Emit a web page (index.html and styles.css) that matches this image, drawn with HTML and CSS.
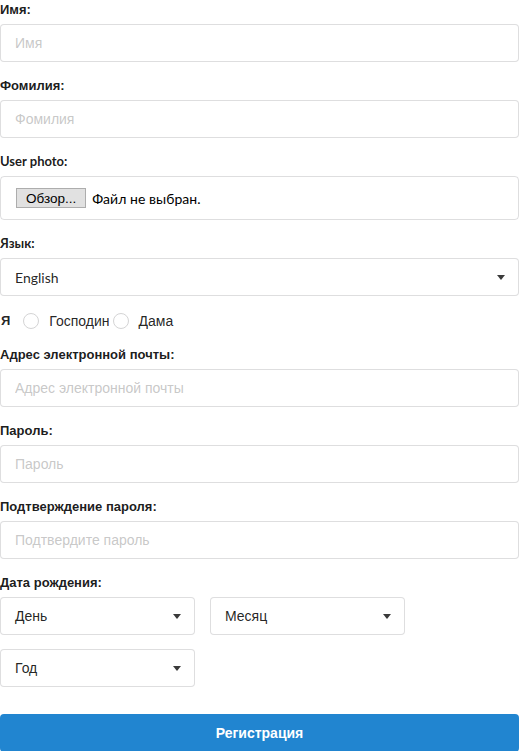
FILE: index.html
```html
<!DOCTYPE html>
<html lang="ru">
<head>
<meta charset="utf-8">
<title>Регистрация</title>
<link rel="stylesheet" href="styles.css">
</head>
<body>
<form class="form">
  <div class="field">
    <label class="label">Имя:</label>
    <input class="input" type="text" placeholder="Имя">
  </div>
  <div class="field">
    <label class="label">Фомилия:</label>
    <input class="input" type="text" placeholder="Фомилия">
  </div>
  <div class="field">
    <label class="label label-lato">User photo:</label>
    <div class="file-box">
      <span class="file-btn">Обзор...</span>
      <span class="file-text">Файл не выбран.</span>
    </div>
  </div>
  <div class="field">
    <label class="label label-lato">Язык:</label>
    <div class="select select-lato">
      <span>English</span>
      <svg class="caret" width="8" height="5" viewBox="0 0 8 5"><path d="M0 0H8L4 5Z" fill="#3a3a3a"/></svg>
    </div>
  </div>
  <div class="field radio-row">
    <span class="radio-label">Я</span>
    <label class="radio"><input type="radio" name="sex"><span>Господин</span></label>
    <label class="radio"><input type="radio" name="sex"><span>Дама</span></label>
  </div>
  <div class="field">
    <label class="label">Адрес электронной почты:</label>
    <input class="input" type="email" placeholder="Адрес электронной почты">
  </div>
  <div class="field">
    <label class="label">Пароль:</label>
    <input class="input" type="password" placeholder="Пароль">
  </div>
  <div class="field">
    <label class="label">Подтверждение пароля:</label>
    <input class="input" type="password" placeholder="Подтвердите пароль">
  </div>
  <div class="field">
    <label class="label">Дата рождения:</label>
    <div class="date-grid">
      <div class="select">
        <span>День</span>
        <svg class="caret" width="8" height="5" viewBox="0 0 8 5"><path d="M0 0H8L4 5Z" fill="#3a3a3a"/></svg>
      </div>
      <div class="select">
        <span>Месяц</span>
        <svg class="caret" width="8" height="5" viewBox="0 0 8 5"><path d="M0 0H8L4 5Z" fill="#3a3a3a"/></svg>
      </div>
      <div class="select">
        <span>Год</span>
        <svg class="caret" width="8" height="5" viewBox="0 0 8 5"><path d="M0 0H8L4 5Z" fill="#3a3a3a"/></svg>
      </div>
    </div>
  </div>
  <button class="submit" type="button">Регистрация</button>
</form>
</body>
</html>
```
FILE: styles.css
```css
* {
  box-sizing: border-box;
}

html, body {
  margin: 0;
  padding: 0;
  background: #ffffff;
}

body {
  font-family: "Liberation Sans", Arial, sans-serif;
  font-size: 14px;
  color: rgba(0, 0, 0, 0.87);
  overflow: hidden;
}

.form {
  width: 519px;
}

.field {
  margin-bottom: 14px;
}

.label {
  display: block;
  height: 19px;
  line-height: 19px;
  margin-bottom: 5px;
  font-size: 13px;
  font-weight: bold;
  color: rgba(0, 0, 0, 0.9);
}

.label-lato {
  font-family: Lato, "Liberation Sans", sans-serif;
}

.input {
  display: block;
  width: 100%;
  height: 38px;
  margin: 0;
  padding: 0 14px;
  border: 1px solid rgba(34, 36, 38, 0.15);
  border-radius: 4px;
  font-family: "Liberation Sans", Arial, sans-serif;
  font-size: 14px;
  color: rgba(0, 0, 0, 0.87);
  background: #fff;
  outline: none;
}

.input::placeholder {
  color: rgba(191, 191, 191, 0.87);
}

.file-box {
  display: flex;
  align-items: center;
  height: 44px;
  padding: 0 15px;
  border: 1px solid rgba(34, 36, 38, 0.15);
  border-radius: 4px;
  font-family: Lato, "Liberation Sans", sans-serif;
  font-size: 14px;
  color: #000;
}

.file-btn {
  display: inline-flex;
  align-items: center;
  height: 20px;
  padding: 0 9px;
  margin-right: 6px;
  background: #e1e1e1;
  border: 1px solid #adadad;
  font-family: "Liberation Sans", Arial, sans-serif;
  font-size: 13.5px;
  color: #000;
}

.file-text {
  font-size: 14px;
  letter-spacing: 0.05px;
}

.select {
  display: flex;
  align-items: center;
  justify-content: space-between;
  height: 38px;
  padding: 0 13px 0 14px;
  border: 1px solid rgba(34, 36, 38, 0.15);
  border-radius: 4px;
  font-size: 14px;
  color: rgba(0, 0, 0, 0.87);
  background: #fff;
}

.select-lato {
  font-family: Lato, "Liberation Sans", sans-serif;
}

.caret {
  display: block;
  width: 8px;
  height: 5px;
}

.radio-row {
  display: flex;
  align-items: center;
  height: 21px;
  margin-top: 0;
}

.radio-label {
  font-size: 13px;
  font-weight: bold;
  margin-right: 7px;
  margin-left: 1px;
}

.radio {
  display: flex;
  align-items: center;
  font-size: 14px;
  color: rgba(0, 0, 0, 0.87);
}

.radio input {
  appearance: none;
  -webkit-appearance: none;
  width: 16px;
  height: 16px;
  margin: 0 10px 0 6px;
  border: 1px solid #d4d4d5;
  border-radius: 50%;
  background: #fff;
}

.radio + .radio input {
  margin-left: 3px;
}

.date-grid {
  display: grid;
  grid-template-columns: 195px 195px;
  column-gap: 15px;
  row-gap: 14px;
}

.submit {
  display: block;
  width: 100%;
  height: 38px;
  margin-top: 27px;
  border: none;
  border-radius: 4px;
  background: #2185d0;
  color: #fff;
  font-family: "Liberation Sans", Arial, sans-serif;
  font-size: 14px;
  font-weight: bold;
}
```
